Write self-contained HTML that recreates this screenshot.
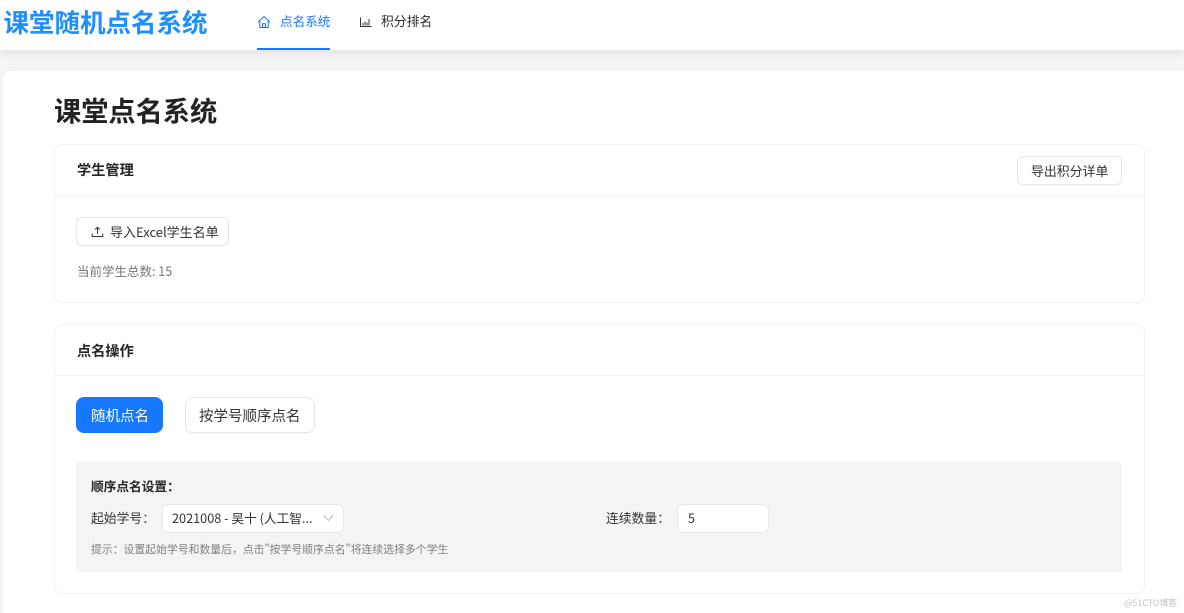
<!DOCTYPE html>
<html lang="zh-CN">
<head>
<meta charset="utf-8">
<title>课堂点名系统</title>
<style>
html,body{margin:0;padding:0;width:1184px;height:613px;overflow:hidden;background:#f4f4f4;}
body{font-family:"Noto Sans CJK SC","Liberation Sans",sans-serif;position:relative;color:#2a2a2a;filter:blur(.3px);}
.a{position:absolute;white-space:nowrap;line-height:1;}
.box{position:absolute;box-sizing:border-box;}
header{position:absolute;left:0;top:0;width:1184px;height:50px;background:#fff;box-shadow:0 2px 8px rgba(0,0,0,.09);}
.card{background:#fff;border:1px solid #f2f2f2;border-radius:8px;}
.btn{background:#fff;border:1px solid #e6e6e6;border-radius:6px;box-shadow:0 1px 1px rgba(0,0,0,.02);}
</style>
</head>
<body>
<header></header>
<div class="a" style="left:3.5px;top:9px;font-size:25.5px;font-weight:700;color:#1f8fff;">课堂随机点名系统</div>

<svg class="a" style="left:257px;top:15px" width="14" height="14" viewBox="0 0 14 14" fill="none" stroke="#1677ff" stroke-width="1"><path d="M1 7 7 1.5 13 7M2.8 5.8V12.5H11.2V5.8M5.5 12.5V8.8H8.5V12.5"/></svg>
<div class="a" style="left:280px;top:15px;font-size:12.6px;color:#1677ff;">点名系统</div>
<div class="box" style="left:257px;top:48px;width:73px;height:2px;background:#1677ff;"></div>

<svg class="a" style="left:360px;top:16px" width="12" height="12" viewBox="0 0 12 12" fill="none" stroke="#333" stroke-width="1"><path d="M.5 1.5V10.5H11.5M3 9.5V7M5 9.5V5.5M7 9.5V6.5M9 9.5V3"/></svg>
<div class="a" style="left:381px;top:15px;font-size:12.8px;color:#2a2a2a;">积分排名</div>

<div class="box" style="left:3px;top:71px;width:1181px;height:542px;background:#fff;border-radius:8px 0 0 0;"></div>

<div class="a" style="left:54px;top:96px;font-size:27.2px;font-weight:700;color:#222;">课堂点名系统</div>

<!-- 学生管理 -->
<div class="box card" style="left:54px;top:144px;width:1091px;height:159px;"></div>
<div class="box" style="left:55px;top:195px;width:1089px;height:1px;background:#f2f2f2;"></div>
<div class="a" style="left:77px;top:163px;font-size:14.2px;font-weight:700;color:#262626;">学生管理</div>
<div class="box btn" style="left:1017px;top:156px;width:105px;height:29px;"></div>
<div class="a" style="left:1031px;top:165px;font-size:12.9px;color:#333;">导出积分详单</div>

<div class="box btn" style="left:76px;top:217px;width:153px;height:29px;"></div>
<svg class="a" style="left:91px;top:226px" width="13" height="12" viewBox="0 0 13 12" fill="none" stroke="#333" stroke-width="1"><path d="M6.5 8V1.5M4.2 3.6 6.5 1.2 8.8 3.6M1.2 7.5V10.5H11.8V7.5"/></svg>
<div class="a" style="left:110px;top:225px;font-size:13px;color:#333;">导入Excel学生名单</div>
<div class="a" style="left:77px;top:265px;font-size:12.5px;color:#777;">当前学生总数: 15</div>

<!-- 点名操作 -->
<div class="box card" style="left:54px;top:324px;width:1091px;height:270px;"></div>
<div class="box" style="left:55px;top:375px;width:1089px;height:1px;background:#f2f2f2;"></div>
<div class="a" style="left:77px;top:344px;font-size:14.2px;font-weight:700;color:#262626;">点名操作</div>
<div class="box" style="left:76px;top:397px;width:87px;height:36px;background:#1677ff;border-radius:8px;"></div>
<div class="a" style="left:91px;top:409px;font-size:14.5px;color:#fff;">随机点名</div>
<div class="box btn" style="left:185px;top:397px;width:130px;height:36px;border-radius:8px;"></div>
<div class="a" style="left:199px;top:409px;font-size:14.5px;color:#333;">按学号顺序点名</div>

<div class="box" style="left:76px;top:462px;width:1046px;height:110px;background:#f4f4f4;border-radius:4px;"></div>
<div class="a" style="left:91px;top:480px;font-size:12.7px;font-weight:700;color:#262626;">顺序点名设置&#xFF1A;</div>
<div class="a" style="left:91px;top:512px;font-size:12.8px;color:#333;">起始学号&#xFF1A;</div>
<div class="box" style="left:162px;top:504px;width:182px;height:29px;background:#fff;border:1px solid #e8e8e8;border-radius:6px;"></div>
<div class="a" style="left:172px;top:512px;font-size:12.7px;color:#333;">2021008 - 吴十 (人工智...</div>
<svg class="a" style="left:323px;top:514px" width="11" height="8" viewBox="0 0 11 8" fill="none" stroke="#bbb" stroke-width="1"><path d="M1 1.5 5.5 6.5 10 1.5"/></svg>

<div class="a" style="left:606px;top:512px;font-size:12.8px;color:#333;">连续数量&#xFF1A;</div>
<div class="box" style="left:677px;top:504px;width:92px;height:29px;background:#fff;border:1px solid #e8e8e8;border-radius:6px;"></div>
<div class="a" style="left:688px;top:512px;font-size:12.5px;color:#333;">5</div>

<div class="a" style="left:91px;top:544px;font-size:10.85px;color:#808080;">提示&#xFF1A;设置起始学号和数量后&#xFF0C;点击"按学号顺序点名"将连续选择多个学生</div>

<div class="a" style="left:1124px;top:599px;font-size:8.9px;color:#c4c4c4;">@51CTO博客</div>
</body>
</html>
